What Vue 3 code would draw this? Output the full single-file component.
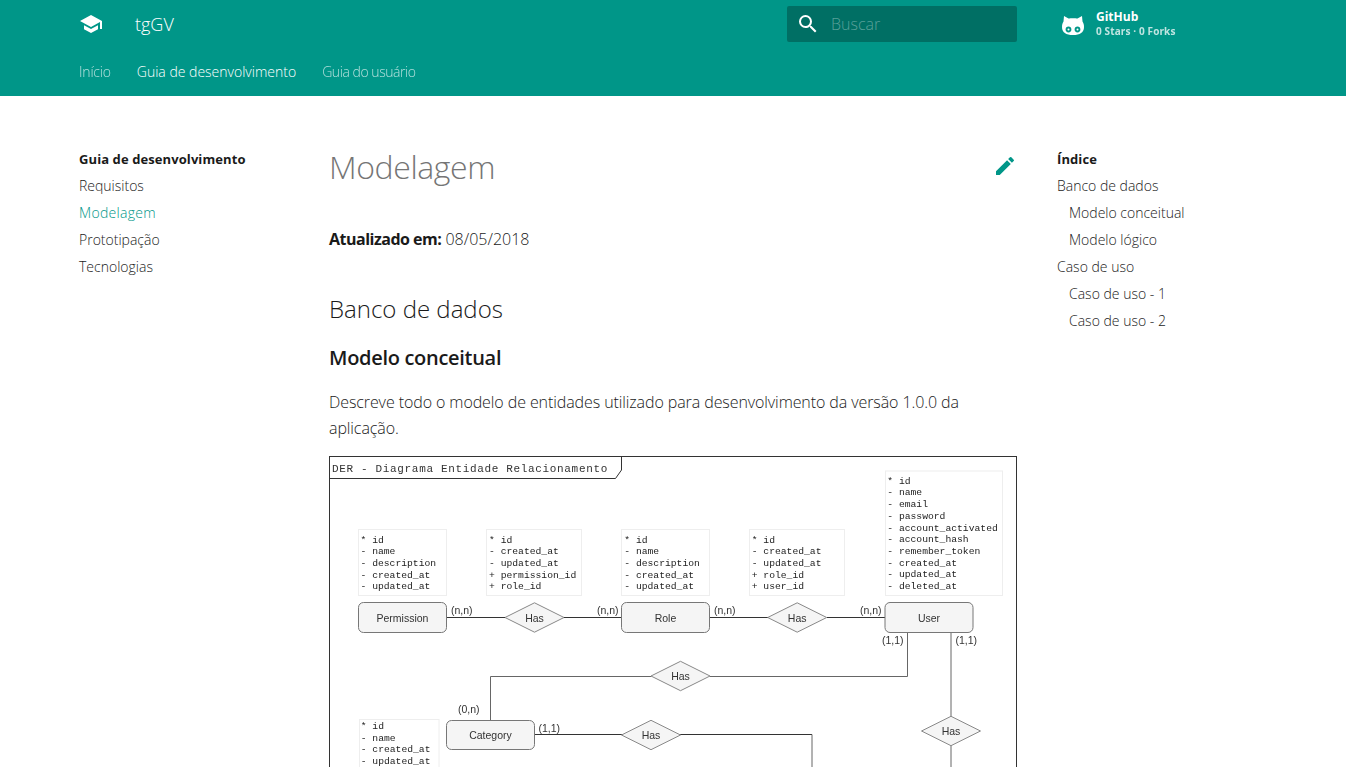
<script setup>
const navItems = ['Requisitos', 'Modelagem', 'Prototipação', 'Tecnologias']
const tocItems = [
  { text: 'Banco de dados', sub: false },
  { text: 'Modelo conceitual', sub: true },
  { text: 'Modelo lógico', sub: true },
  { text: 'Caso de uso', sub: false },
  { text: 'Caso de uso - 1', sub: true },
  { text: 'Caso de uso - 2', sub: true }
]

const attrBoxes = [
  { x: 358.5, y: 529.5, w: 88, h: 66, tx: 360.5, ty: 542.5, rows: ['* id', '- name', '- description', '- created_at', '- updated_at'] },
  { x: 486.5, y: 529.5, w: 95, h: 66, tx: 489, ty: 542.5, rows: ['* id', '- created_at', '- updated_at', '+ permission_id', '+ role_id'] },
  { x: 621.5, y: 529.5, w: 88, h: 66, tx: 624.3, ty: 542.5, rows: ['* id', '- name', '- description', '- created_at', '- updated_at'] },
  { x: 749.5, y: 529.5, w: 95, h: 66, tx: 751.7, ty: 542.5, rows: ['* id', '- created_at', '- updated_at', '+ role_id', '+ user_id'] },
  { x: 885.5, y: 471, w: 117, h: 124.5, tx: 887.3, ty: 483.7, rows: ['* id', '- name', '- email', '- password', '- account_activated', '- account_hash', '- remember_token', '- created_at', '- updated_at', '- deleted_at'] },
  { x: 359.5, y: 719.5, w: 79.5, h: 66, tx: 360.7, ty: 729, rows: ['* id', '- name', '- created_at', '- updated_at'] }
]

const entities = [
  { x: 358.5, y: 602.5, w: 88, h: 30, label: 'Permission' },
  { x: 621.5, y: 602.5, w: 88, h: 30, label: 'Role' },
  { x: 885, y: 602.5, w: 88, h: 30, label: 'User' },
  { x: 446.5, y: 720.5, w: 88, h: 29, label: 'Category' }
]

const diamonds = [
  { cx: 534.5, cy: 617.5 },
  { cx: 797.2, cy: 617.5 },
  { cx: 680.5, cy: 676 },
  { cx: 651, cy: 735 },
  { cx: 951, cy: 731 }
]
const diamondPoints = (d) =>
  `${d.cx - 29.5},${d.cy} ${d.cx},${d.cy - 14.7} ${d.cx + 29.5},${d.cy} ${d.cx},${d.cy + 14.7}`

const labels = [
  { x: 451, y: 614, text: '(n,n)' },
  { x: 597, y: 614, text: '(n,n)' },
  { x: 714, y: 614, text: '(n,n)' },
  { x: 860, y: 614, text: '(n,n)' },
  { x: 882, y: 644, text: '(1,1)' },
  { x: 955.5, y: 644, text: '(1,1)' },
  { x: 458, y: 713, text: '(0,n)' },
  { x: 538.5, y: 732, text: '(1,1)' }
]
</script>

<template>
  <div class="page">
    <header class="header">
      <div class="top-row">
        <svg class="logo" viewBox="0 0 24 24" width="24" height="24">
          <path d="M5 13.18v4L12 21l7-3.82v-4L12 17l-7-3.82zM12 3L1 9l11 6 9-4.91V17h2V9L12 3z" fill="#fff" />
        </svg>
        <span class="site-name">tgGV</span>
        <div class="search">
          <svg viewBox="0 0 24 24" width="24" height="24">
            <path d="M15.5 14h-.79l-.28-.27A6.47 6.47 0 0 0 16 9.5 6.5 6.5 0 1 0 9.5 16c1.61 0 3.09-.59 4.23-1.57l.27.28v.79l5 4.99L20.49 19l-4.99-5zm-6 0C7.01 14 5 11.99 5 9.5S7.01 5 9.5 5 14 7.01 14 9.5 11.99 14 9.5 14z" fill="#fff" />
          </svg>
          <span class="search-text">Buscar</span>
        </div>
        <div class="repo">
          <svg class="repo-icon" viewBox="0 0 22 19" width="22" height="19">
            <path fill="#fff" fill-rule="evenodd" d="M2 0 L6.5 2.6 C8.5 2.2 13.5 2.2 15.5 2.6 L20 0 L20.5 5.5 C21.5 7 22 8.6 22 11 C22 16.5 18 19 11 19 C4 19 0 16.5 0 11 C0 8.6 .5 7 1.5 5.5 Z M6.5 10.6 C4.7 10.6 3.6 11.9 3.6 13.5 C3.6 15.1 4.7 16.4 6.5 16.4 C8.3 16.4 9.4 15.1 9.4 13.5 C9.4 11.9 8.3 10.6 6.5 10.6 Z M15.5 10.6 C13.7 10.6 12.6 11.9 12.6 13.5 C12.6 15.1 13.7 16.4 15.5 16.4 C17.3 16.4 18.4 15.1 18.4 13.5 C18.4 11.9 17.3 10.6 15.5 10.6 Z" />
            <circle cx="6.5" cy="13.5" r="1" fill="#fff" />
            <circle cx="15.5" cy="13.5" r="1" fill="#fff" />
          </svg>
          <div class="repo-text">
            <div class="repo-name">GitHub</div>
            <div class="repo-stats">0 Stars · 0 Forks</div>
          </div>
        </div>
      </div>
      <nav class="tabs">
        <a class="tab">Início</a>
        <a class="tab active">Guia de desenvolvimento</a>
        <a class="tab">Guia do usuário</a>
      </nav>
    </header>

    <div class="body-row">
      <aside class="sidebar">
        <div class="side-title">Guia de desenvolvimento</div>
        <a v-for="item in navItems" :key="item" class="side-link" :class="{ current: item === 'Modelagem' }">{{ item }}</a>
      </aside>

      <main class="content">
        <div class="title-row">
          <h1>Modelagem</h1>
          <svg class="edit" viewBox="0 0 24 24" width="24" height="24">
            <path d="M3 17.25V21h3.75L17.81 9.94l-3.75-3.75L3 17.25zM20.71 7.04a1 1 0 0 0 0-1.41l-2.34-2.34a1 1 0 0 0-1.41 0l-1.83 1.83 3.75 3.75 1.83-1.83z" fill="#009688" />
          </svg>
        </div>
        <p class="updated"><strong>Atualizado em:</strong> 08/05/2018</p>
        <h2>Banco de dados</h2>
        <h3>Modelo conceitual</h3>
        <p class="desc">Descreve todo o modelo de entidades utilizado para desenvolvimento da versão 1.0.0 da aplicação.</p>

        <svg class="diagram" viewBox="329 456 688 321" width="688" height="321">
          <rect x="329.5" y="456.5" width="687" height="340" fill="#fff" stroke="#333" />
          <path d="M329.5 478.5 H615.5 L621.5 470 V456.5" fill="none" stroke="#333" />
          <text class="frame-title" x="332" y="471.5">DER - Diagrama Entidade Relacionamento</text>

          <g v-for="box in attrBoxes" :key="box.x">
            <rect :x="box.x" :y="box.y" :width="box.w" :height="box.h" fill="#fff" stroke="#eee" />
            <text v-for="(row, i) in box.rows" :key="i" class="attr" :x="box.tx" :y="box.ty + i * 11.7">{{ row }}</text>
          </g>

          <path d="M446.5 617.5 H505 M564 617.5 H621.5 M709.5 617.5 H768 M827 617.5 H885 M534.5 734.5 H622 M680 734.5 H812" fill="none" stroke="#333" />
          <path d="M490.5 720.5 V676.5 H651.5 M709.5 676.5 H907.5 V632.5 M951 632.5 V716.5 M951 745.5 V777 M812 734.5 V777" fill="none" stroke="#666" />

          <polygon v-for="d in diamonds" :key="d.cx" :points="diamondPoints(d)" fill="#f5f5f5" stroke="#888" />
          <text v-for="d in diamonds" :key="'t' + d.cx" class="shape-label" :x="d.cx" :y="d.cy + 4">Has</text>

          <g v-for="e in entities" :key="e.label">
            <rect :x="e.x" :y="e.y" :width="e.w" :height="e.h" rx="5" fill="#f5f5f5" stroke="#777" />
            <text class="shape-label" :x="e.x + e.w / 2" :y="e.y + e.h / 2 + 4">{{ e.label }}</text>
          </g>

          <text v-for="l in labels" :key="l.x" class="card" :x="l.x" :y="l.y">{{ l.text }}</text>
        </svg>
      </main>

      <aside class="toc">
        <div class="side-title">Índice</div>
        <a v-for="item in tocItems" :key="item.text" class="side-link" :class="{ sub: item.sub }">{{ item.text }}</a>
      </aside>
    </div>
  </div>
</template>

<style>
html, body {
  margin: 0;
  height: 767px;
  overflow: hidden;
  background: #fff;
}
</style>

<style scoped>
.page {
  width: 1346px;
  height: 767px;
  overflow: hidden;
  font-family: "Open Sans", "Noto Sans", sans-serif;
  font-weight: 300;
  color: #1a1a1a;
}

.header {
  height: 96px;
  background: #009688;
  color: #fff;
}

.top-row {
  height: 48px;
  display: flex;
  align-items: center;
  padding-left: 79px;
}

.logo {
  flex: none;
}

.site-name {
  margin-left: 32px;
  font-size: 18px;
  width: 652px;
}

.search {
  width: 230px;
  height: 36px;
  box-sizing: border-box;
  padding-left: 9px;
  display: flex;
  align-items: center;
  gap: 11px;
  background: rgba(0, 0, 0, 0.26);
  border-radius: 2px;
}

.search-text {
  font-size: 16px;
  color: rgba(255, 255, 255, 0.35);
}

.repo {
  margin-left: 45px;
  display: flex;
  align-items: center;
  gap: 12px;
}

.repo-icon {
  flex: none;
  margin-top: 2px;
}

.repo-name {
  font-size: 12px;
  line-height: 15px;
  font-weight: 700;
}

.repo-stats {
  font-size: 10px;
  line-height: 15px;
  font-weight: 700;
  letter-spacing: 0.12px;
  opacity: 0.75;
}

.tabs {
  height: 46px;
  display: flex;
  align-items: center;
  padding-left: 79px;
  gap: 26px;
}

.tab {
  font-size: 14px;
  opacity: 0.7;
}

.tab:first-child {
  letter-spacing: -0.2px;
}

.tab:last-child {
  letter-spacing: -0.45px;
}

.tab.active {
  opacity: 1;
}

.body-row {
  display: flex;
}

.sidebar {
  width: 250px;
  margin-left: 79px;
  padding-top: 50px;
  flex: none;
}

.toc {
  width: 226px;
  margin-left: 40px;
  padding-top: 50px;
  flex: none;
}

.side-title {
  font-size: 13px;
  line-height: 26px;
  font-weight: 700;
  letter-spacing: 0.09px;
}

.side-link {
  display: block;
  font-size: 14px;
  line-height: 27px;
}

.side-link.current {
  color: #009688;
  letter-spacing: 0.3px;
}

.side-link.sub {
  padding-left: 12px;
}

.content {
  width: 688px;
  flex: none;
  padding-top: 51px;
}

.title-row {
  display: flex;
  justify-content: space-between;
  align-items: center;
  height: 40px;
}

h1 {
  margin: 0;
  font-size: 32px;
  line-height: 40px;
  font-weight: 300;
  letter-spacing: -0.4px;
  color: #757575;
}

.edit {
  flex: none;
  margin-top: -2px;
}

.updated {
  margin: 39px 0 0;
  font-size: 16px;
  line-height: 26px;
}

.updated strong {
  font-weight: 700;
  letter-spacing: -0.5px;
}

h2 {
  margin: 41px 0 0;
  font-size: 24px;
  line-height: 32px;
  font-weight: 300;
}

h3 {
  margin: 20px 0 0;
  font-size: 20px;
  line-height: 26px;
  font-weight: 600;
  letter-spacing: -0.3px;
}

.desc {
  margin: 18px 0 0;
  font-size: 16px;
  line-height: 26px;
  letter-spacing: -0.09px;
}

.diagram {
  display: block;
  margin-top: 15px;
  filter: blur(0.3px);
}

.frame-title {
  font-family: "Liberation Mono", monospace;
  font-size: 11px;
  font-weight: 400;
  letter-spacing: 0.66px;
  fill: #333;
}

.attr {
  font-family: "Liberation Mono", monospace;
  font-size: 9.7px;
  font-weight: 400;
  fill: #222;
  white-space: pre;
}

.shape-label {
  font-family: "Liberation Sans", Arial, sans-serif;
  font-size: 10.5px;
  font-weight: 400;
  fill: #333;
  text-anchor: middle;
}

.card {
  font-family: "Liberation Sans", Arial, sans-serif;
  font-size: 10.5px;
  font-weight: 400;
  fill: #333;
}
</style>
